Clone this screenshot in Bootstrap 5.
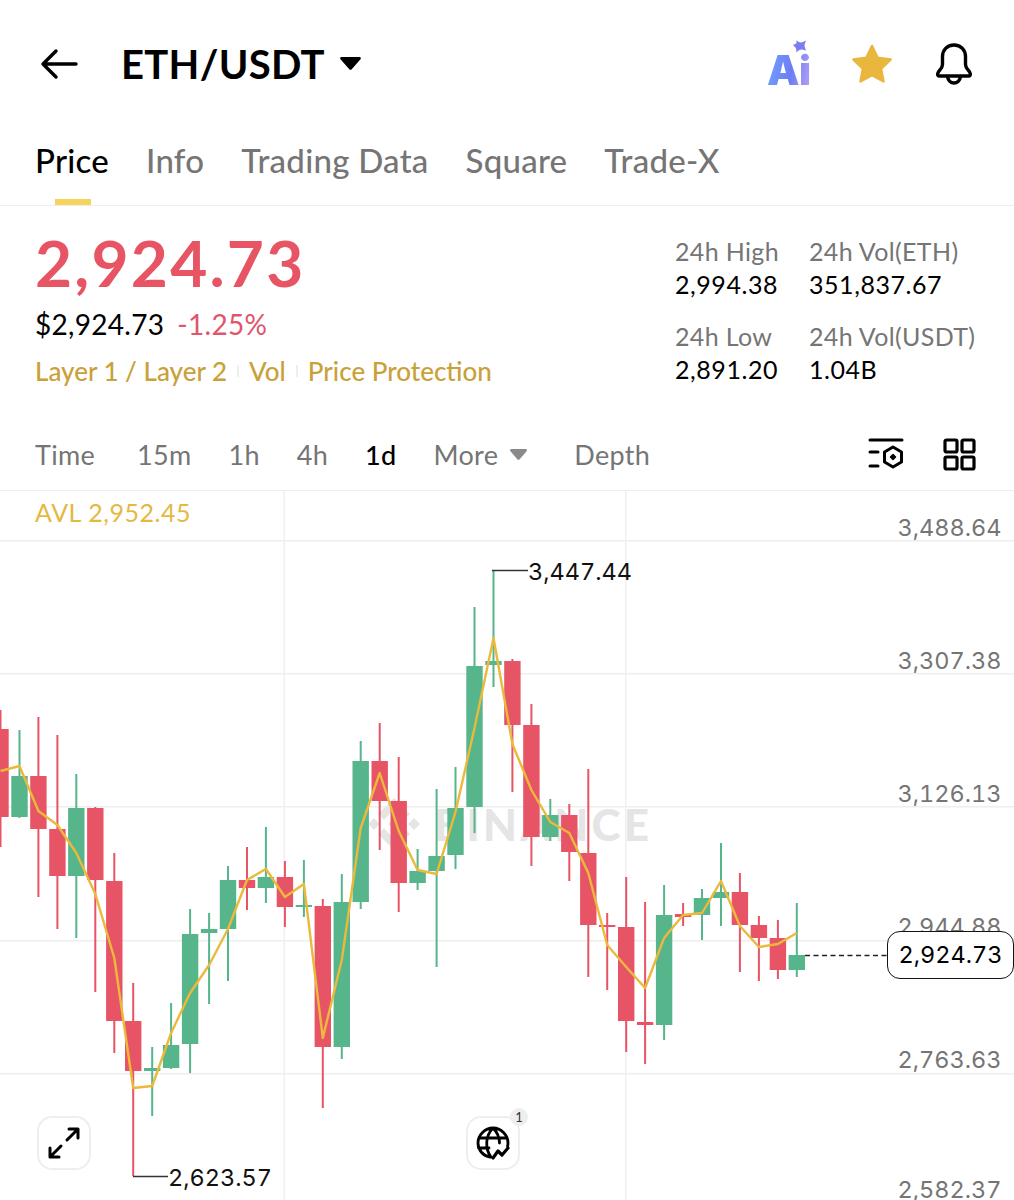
<!DOCTYPE html>
<html lang="en">
<head>
    <meta charset="UTF-8">
    <meta name="viewport" content="width=device-width, initial-scale=1.0">
    <title>ETH/USDT</title>
    <link href="https://cdn.jsdelivr.net/npm/bootstrap@5.3.0/dist/css/bootstrap.min.css" rel="stylesheet">
    <style>
        body { background: #fff; color: #000; font-family: "Lato", "Liberation Sans", sans-serif; overflow: hidden; }
        .app-page { width: 1014px; height: 1200px; overflow: hidden; }

        .top-bar { height: 125px; padding: 2px 40px 0 40px; }
        .back-btn { width: 38px; height: 34px; margin-right: 43px; }
        .pair-title { font-size: 40px; font-weight: 700; line-height: 1; letter-spacing: .3px; }
        .pair-caret { width: 21px; height: 13px; margin-left: 15px; }
        .top-icons { gap: 41px; }
        .ai-mark { position: relative; width: 42px; height: 46px; margin-right: 1px; }
        .ai-text { position: absolute; left: 0; bottom: 0; font-family: "Inter", sans-serif; font-size: 41px; font-weight: 900; line-height: 34px;
            letter-spacing: -.5px; background: linear-gradient(100deg, #6fa4fb 0%, #6d7cf6 55%, #b9a2f5 100%); -webkit-background-clip: text; background-clip: text; color: transparent; }
        .ai-spark { position: absolute; left: 26px; top: -1px; width: 13px; height: 13px; }

        .tab-bar { height: 81px; padding: 0 35px; gap: 37px; border-bottom: 1px solid #eeeeee; }
        .tab-item { position: relative; font-size: 33px; font-weight: 500; color: #757575; line-height: 1; padding-bottom: 28px; letter-spacing: .25px; }
        .tab-item.is-active { color: #000; }
        .tab-item.is-active::after { content: ""; position: absolute; left: 20px; bottom: 0; width: 36px; height: 6px; background: #f6d35b; }

        .stats-block { height: 209px; padding: 0 36px 0 35px; }
        .big-price { font-size: 64px; font-weight: 700; line-height: 1; color: #e75565; margin-top: 25px; letter-spacing: 2.2px; }
        .fiat-row { font-size: 28px; line-height: 1; margin-top: 15px; gap: 13px; letter-spacing: .3px; }
        .fiat-change { color: #e0566d; }
        .tag-row { font-size: 26px; line-height: 1; margin-top: 20px; color: #c9a13a; font-weight: 500; }
        .tag-sep { width: 2px; height: 12px; background: #eeeeee; margin: 0 10px; }
        .side-stats { width: 303px; margin-top: 29px; column-gap: 30px; }
        .stat-label { font-size: 25px; line-height: 33px; color: #757575; white-space: nowrap; letter-spacing: .35px; }
        .stat-value { font-size: 25px; line-height: 33px; margin-bottom: 19px; white-space: nowrap; letter-spacing: .55px; }

        .interval-bar { height: 75px; padding: 3px 38px 0 35px; font-size: 27px; color: #757575; }
        .interval-item { margin-right: 37px; line-height: 1; letter-spacing: .3px; }
        .interval-item:first-child { margin-right: 42px; }
        .more-item { margin-right: 47px; }
        .interval-item.is-active { color: #000; font-weight: 500; }
        .more-caret { width: 17px; height: 11px; margin-left: 12px; }
        .tool-icons { gap: 39px; }

        .chart-area { position: relative; height: 710px; border-top: 1px solid #eeeeee; overflow: hidden; }
        .chart-svg { position: absolute; left: 0; top: 0; }
        .watermark { position: absolute; left: 368px; top: 307px; gap: 14px; color: #e5e5e5; font-family: "Lato", sans-serif; font-size: 44px; font-weight: 900; line-height: 52px; letter-spacing: 3.2px; }
        .avl-label { position: absolute; left: 35px; top: 6px; font-size: 25px; line-height: 30px; color: #e5b83f; letter-spacing: .55px; }
        .axis-label, .mark-label, .last-price { font-family: "Inter", sans-serif; font-size: 23.5px; line-height: 18px; white-space: nowrap; font-variant-numeric: tabular-nums; }
        .axis-label { position: absolute; right: 12.5px; color: #757575; }
        .mark-label { position: absolute; color: #111; }
        .last-price { position: absolute; left: 887px; top: 440px; width: 127px; height: 48px; line-height: 46px; text-align: center; background: #fff; border: 1.5px solid #111; border-radius: 13px; }
        .float-btn { position: absolute; top: 625px; width: 54px; height: 54px; background: #fff; border: 2px solid #eeeeee; border-radius: 15px; }
        .float-expand { left: 37px; }
        .float-globe { left: 466px; }
        .float-count { position: absolute; left: 510px; top: 617px; width: 18px; height: 18px; border-radius: 50%; background: #eeeeee; font-size: 13px; line-height: 18px; text-align: center; color: #333; }
    </style>
</head>
<body>
    <div class="app-page d-flex flex-column">
        <div class="top-bar d-flex align-items-center">
            <svg class="back-btn" viewBox="0 0 38 34" fill="none" stroke="#000" stroke-width="3.4" stroke-linecap="round" stroke-linejoin="round"><path d="M36 17H3M16 4 3 17l13 13"/></svg>
            <span class="pair-title">ETH/USDT</span>
            <svg class="pair-caret" viewBox="0 0 21 13"><path d="M1.5 0h18c1.200 0 1.800 1.300 1 2.200l-9 10.200c-.5.600-1.500.6-2 0L.5 2.200C-.3 1.300.3 0 1.500 0z" fill="#000"/></svg>
            <div class="top-icons d-flex align-items-center ms-auto">
                <div class="ai-mark">
                    <span class="ai-text">Ai</span>
                    <svg class="ai-spark" viewBox="0 0 13 13"><path d="M3.500 0c1 1.500 2.500 2.500 4.500 2.600 1.500-.4 3-1 5-2-.6 2-1.400 3.500-1.500 5 0 1.800 1 3.200 1.500 4.900-2-.5-3.500-1-5-1-1.800.4-3.200 1.500-4.600 3 0-2-.1-3.600-1-5C1.600 7 .8 6 0 4.800 1.400 4.300 2.700 4 3.400 3.200c.3-1 .2-2 .1-3.200z" fill="#7a7df0"/></svg>
                </div>
                <svg width="42" height="40" viewBox="0 0 42 40"><path d="M21 2l5.600 11.800 13 1.700-9.500 9 2.400 12.900L21 31.100 9.500 37.400l2.400-12.900-9.500-9 13-1.700z" fill="#e9b63e" stroke="#e9b63e" stroke-width="2.500" stroke-linejoin="round"/></svg>
                <svg width="40" height="42" viewBox="0 0 40 42" fill="none" stroke="#000" stroke-width="3.400" stroke-linecap="round" stroke-linejoin="round"><path d="M20 2c-7 0-11.500 5-11.500 11.500v8c0 2.500-1 4-3 6C3.500 29.500 2.500 33 5.500 33h29c3 0 2-3.500 0-5.500-2-2-3-3.500-3-6v-8C31.500 7 27 2 20 2z"/><path d="M13.500 33.500c.5 4 3.200 6.500 6.500 6.500s6-2.500 6.500-6.500"/></svg>
            </div>
        </div>

        <div class="tab-bar d-flex align-items-end">
            <span class="tab-item is-active">Price</span>
            <span class="tab-item">Info</span>
            <span class="tab-item">Trading Data</span>
            <span class="tab-item">Square</span>
            <span class="tab-item">Trade-X</span>
        </div>

        <div class="stats-block d-flex justify-content-between">
            <div>
                <div class="big-price">2,924.73</div>
                <div class="fiat-row d-flex"><span>$2,924.73</span><span class="fiat-change">-1.25%</span></div>
                <div class="tag-row d-flex align-items-center"><span>Layer 1 / Layer 2</span><i class="tag-sep"></i><span>Vol</span><i class="tag-sep"></i><span>Price Protection</span></div>
            </div>
            <div class="side-stats d-flex">
                <div>
                    <div class="stat-label">24h High</div>
                    <div class="stat-value">2,994.38</div>
                    <div class="stat-label">24h Low</div>
                    <div class="stat-value">2,891.20</div>
                </div>
                <div>
                    <div class="stat-label">24h Vol(ETH)</div>
                    <div class="stat-value">351,837.67</div>
                    <div class="stat-label">24h Vol(USDT)</div>
                    <div class="stat-value">1.04B</div>
                </div>
            </div>
        </div>

        <div class="interval-bar d-flex align-items-center">
            <span class="interval-item">Time</span>
            <span class="interval-item">15m</span>
            <span class="interval-item">1h</span>
            <span class="interval-item">4h</span>
            <span class="interval-item is-active">1d</span>
            <span class="interval-item more-item d-flex align-items-center">More<svg class="more-caret" viewBox="0 0 17 11"><path d="M1.500 0h14c1.300 0 1.900 1.400 1 2.300L9.500 10.400c-.5.600-1.500.6-2 0L.5 2.300C-.4 1.400.2 0 1.500 0z" fill="#8a8a8a"/></svg></span>
            <span class="interval-item">Depth</span>
            <div class="tool-icons d-flex align-items-center ms-auto">
                <svg width="36" height="34" viewBox="0 0 36 34" fill="none" stroke="#000" stroke-width="3" stroke-linecap="round" stroke-linejoin="round"><path d="M2 3h32M2 15h8M2 29h8"/><path d="M25 10l8.500 5v10L25 30l-8.500-5V15z"/><path d="M25 17.500l2.500 2.500-2.500 2.500-2.500-2.500z" fill="#000" stroke-width="1.500"/></svg>
                <svg width="33" height="33" viewBox="0 0 33 33" fill="none" stroke="#000" stroke-width="3.200" stroke-linejoin="round"><rect x="2" y="2" width="12" height="12" rx="1.500"/><rect x="19" y="2" width="12" height="12" rx="1.500"/><rect x="2" y="19" width="12" height="12" rx="1.500"/><rect x="19" y="19" width="12" height="12" rx="1.500"/></svg>
            </div>
        </div>

        <div class="chart-area" id="chart">
            <div class="watermark d-flex align-items-center">
                <svg width="52" height="52" viewBox="0 0 126.610 126.610" fill="#e5e5e5"><path d="M38.730 53.200l24.590-24.580 24.600 24.600 14.300-14.310L63.320 0 24.420 38.900zM0 63.310L14.300 49l14.310 14.310-14.310 14.300zM38.730 73.410L63.320 98l24.600-24.600 14.310 14.290-38.900 38.910-38.910-38.880zM98 63.310L112.300 49l14.310 14.300-14.310 14.320zM77.830 63.300L63.320 48.780 48.810 63.280l14.510 14.500z"/></svg>
                <span>BINANCE</span>
            </div>
            <svg class="chart-svg" id="chart-svg" width="1014" height="710" viewBox="0 491 1014 710"></svg>
            <div class="avl-label">AVL 2,952.45</div>
            <div class="float-btn float-expand d-flex align-items-center justify-content-center">
                <svg width="34" height="34" viewBox="0 0 34 34" fill="none" stroke="#000" stroke-width="3" stroke-linecap="round" stroke-linejoin="round"><path d="M20 14 31 3M22 3h9v9M14 20 3 31M3 22v9h9"/></svg>
            </div>
            <div class="float-btn float-globe d-flex align-items-center justify-content-center">
                <svg width="34" height="34" viewBox="0 0 34 34" fill="none" stroke="#000" stroke-width="2.800" stroke-linecap="round" stroke-linejoin="round"><path d="M14 31C7 30 2 24 2 17 2 9 9 2 17 2s15 7 15 15c0 1.500-.2 2.500-.5 3.500M3 12h28M2.500 22H13M17 2c-8 8-8 21-2 29M17 2c4 4 6.500 9 6.500 15"/><path d="M17 32l5-7 4 4 6-7" stroke-width="3.200"/></svg>
            </div>
            <div class="float-count">1</div>
        </div>
    </div>

    <script src="https://cdn.jsdelivr.net/npm/bootstrap@5.3.0/dist/js/bootstrap.bundle.min.js"></script>
    <script>
        const UP = '#56b58a';
        const DOWN = '#e75465';
        const STEP = 18.96;

        // up?, wick top, body top, body bottom, wick bottom, avg line
        const candles = [
            [0, 710, 729, 817, 847, 771], [1, 730, 776, 817, 818, 766], [0, 717, 776, 829, 897, 811],
            [0, 735, 829, 876, 929, 825], [1, 774, 808, 876, 938, 853], [0, 807, 808, 880, 992, 894],
            [0, 853, 881, 1021, 1053, 958], [0, 983, 1021, 1071, 1176, 1088], [1, 1047, 1068, 1071, 1116, 1086],
            [1, 1003, 1045, 1068, 1069, 1033], [1, 909, 934, 1044, 1073, 993], [1, 913, 929, 933, 1004, 965],
            [1, 866, 880, 929, 981, 929], [0, 847, 880, 888, 910, 880], [1, 827, 877, 888, 903, 869],
            [0, 861, 877, 907, 927, 897], [1, 860, 905, 907, 917, 884], [0, 899, 906, 1047, 1108, 1038],
            [1, 874, 902, 1047, 1059, 960], [1, 741, 761, 902, 909, 828], [0, 723, 761, 801, 850, 773],
            [0, 757, 801, 883, 912, 831], [1, 849, 871, 883, 890, 870], [1, 789, 856, 871, 967, 874],
            [1, 767, 808, 855, 869, 812], [1, 607, 666, 807, 833, 728], [1, 570, 661, 665, 687, 638],
            [0, 659, 661, 725, 792, 744], [0, 704, 725, 837, 866, 790], [1, 799, 815, 837, 841, 822],
            [0, 804, 815, 852, 881, 833], [0, 769, 853, 925, 977, 873], [0, 913, 925, 927, 990, 945],
            [0, 877, 927, 1021, 1052, 967], [0, 902, 1022, 1025, 1064, 988], [1, 885, 915, 1025, 1040, 938],
            [0, 903, 914, 917, 926, 915], [1, 889, 898, 915, 940, 913], [1, 843, 892, 898, 926, 881],
            [0, 873, 892, 925, 972, 926], [0, 916, 925, 938, 981, 947], [0, 920, 938, 970, 979, 944],
            [1, 903, 955, 970, 977, 933]
        ];

        // label, grid line y, label centre y
        const axis = [
            ['3,488.64', 540, 528], ['3,307.38', 673, 661], ['3,126.13', 806, 794],
            ['2,944.88', 940, 927], ['2,763.63', 1073, 1060], ['2,582.37', 1206, 1190]
        ];

        let svg = '';
        axis.forEach(function (row) {
            svg += `<rect x="0" y="${row[1]}" width="1014" height="1.500" fill="#eeeeee"/>`;
        });
        [283.5, 625].forEach(function (x) {
            svg += `<rect x="${x}" y="490" width="1.500" height="710" fill="#f0f0f0"/>`;
        });

        let points = [];
        candles.forEach(function (c, i) {
            const x = i * STEP + 0.5;
            const color = c[0] ? UP : DOWN;
            svg += `<rect x="${(x - 1).toFixed(1)}" y="${c[1]}" width="2" height="${c[4] - c[1]}" fill="${color}"/>`;
            svg += `<rect x="${(x - 8.2).toFixed(1)}" y="${c[2]}" width="16.400" height="${c[3] - c[2]}" fill="${color}"/>`;
            points.push(`${x.toFixed(1)},${c[5]}`);
        });
        svg += `<polyline points="${points.join(' ')}" fill="none" stroke="#ebb93b" stroke-width="2.400" stroke-linejoin="round"/>`;

        // high, low and last price leaders
        svg += '<path d="M492 570.500h36M133 1176.500h35" stroke="#333" stroke-width="1.500" fill="none"/>';
        svg += '<path d="M805 955.500h82" stroke="#222" stroke-width="1.300" stroke-dasharray="5 3.500" fill="none"/>';
        document.getElementById('chart-svg').innerHTML = svg;

        const chart = document.getElementById('chart');
        function addLabel(className, text, left, top) {
            const el = document.createElement('div');
            el.className = className;
            el.textContent = text;
            if (left !== null) el.style.left = left + 'px';
            el.style.top = top + 'px';
            chart.appendChild(el);
        }
        axis.forEach(function (row) {
            addLabel('axis-label', row[0], null, row[2] - 491 - 9);
        });
        addLabel('mark-label', '3,447.44', 528, 72);
        addLabel('mark-label', '2,623.57', 168, 678);

        const last = document.createElement('div');
        last.className = 'last-price';
        last.textContent = '2,924.73';
        chart.appendChild(last);
    </script>
</body>
</html>
